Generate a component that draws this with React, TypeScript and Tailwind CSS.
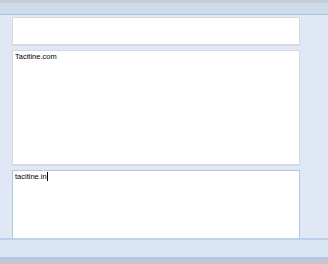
import React from 'react';

const App: React.FC = () => {
  return (
    <div className="w-[328px] h-[264px] flex flex-col bg-[#dfe8f4] overflow-hidden" style={{ fontFamily: '"Liberation Sans", Arial, sans-serif' }}>
      {/* top toolbar remnant */}
      <div className="h-[3px] bg-[#c3ccd8]" />
      <div className="h-[12px] bg-[#cfdae7] border-b border-[#a9c3e3]" />

      {/* editor panes */}
      <div className="flex-1 flex flex-col gap-[4px] pl-[12px] pr-[28px] pt-[2px]">
        <div className="h-[29px] shrink-0 bg-white border border-[#d6d9de] border-b-[2px]" />
        <div className="h-[116px] shrink-0 bg-white border border-[#d6d9de] border-b-[2px] px-[2px] pt-[1px]">
          <div className="text-[7.5px] leading-[9px] text-black">Tacitine.com</div>
        </div>
        <div className="flex-1 bg-white border border-[#aec8e6] border-b-0 px-[2px] pt-[1px]">
          <div className="flex items-center text-[7.5px] leading-[9px] text-black">
            <span>tacitine.in</span>
            <span className="w-px h-[9px] bg-black" />
          </div>
        </div>
      </div>

      {/* bottom status bar */}
      <div className="h-[21px] bg-[#d9e5f3] border-t-[2px] border-[#bcd2ec] border-b-[2px] border-b-[#aac6ea]" />
      <div className="h-[5px] bg-[#c4c8cd]" />
    </div>
  );
};

export default App;
